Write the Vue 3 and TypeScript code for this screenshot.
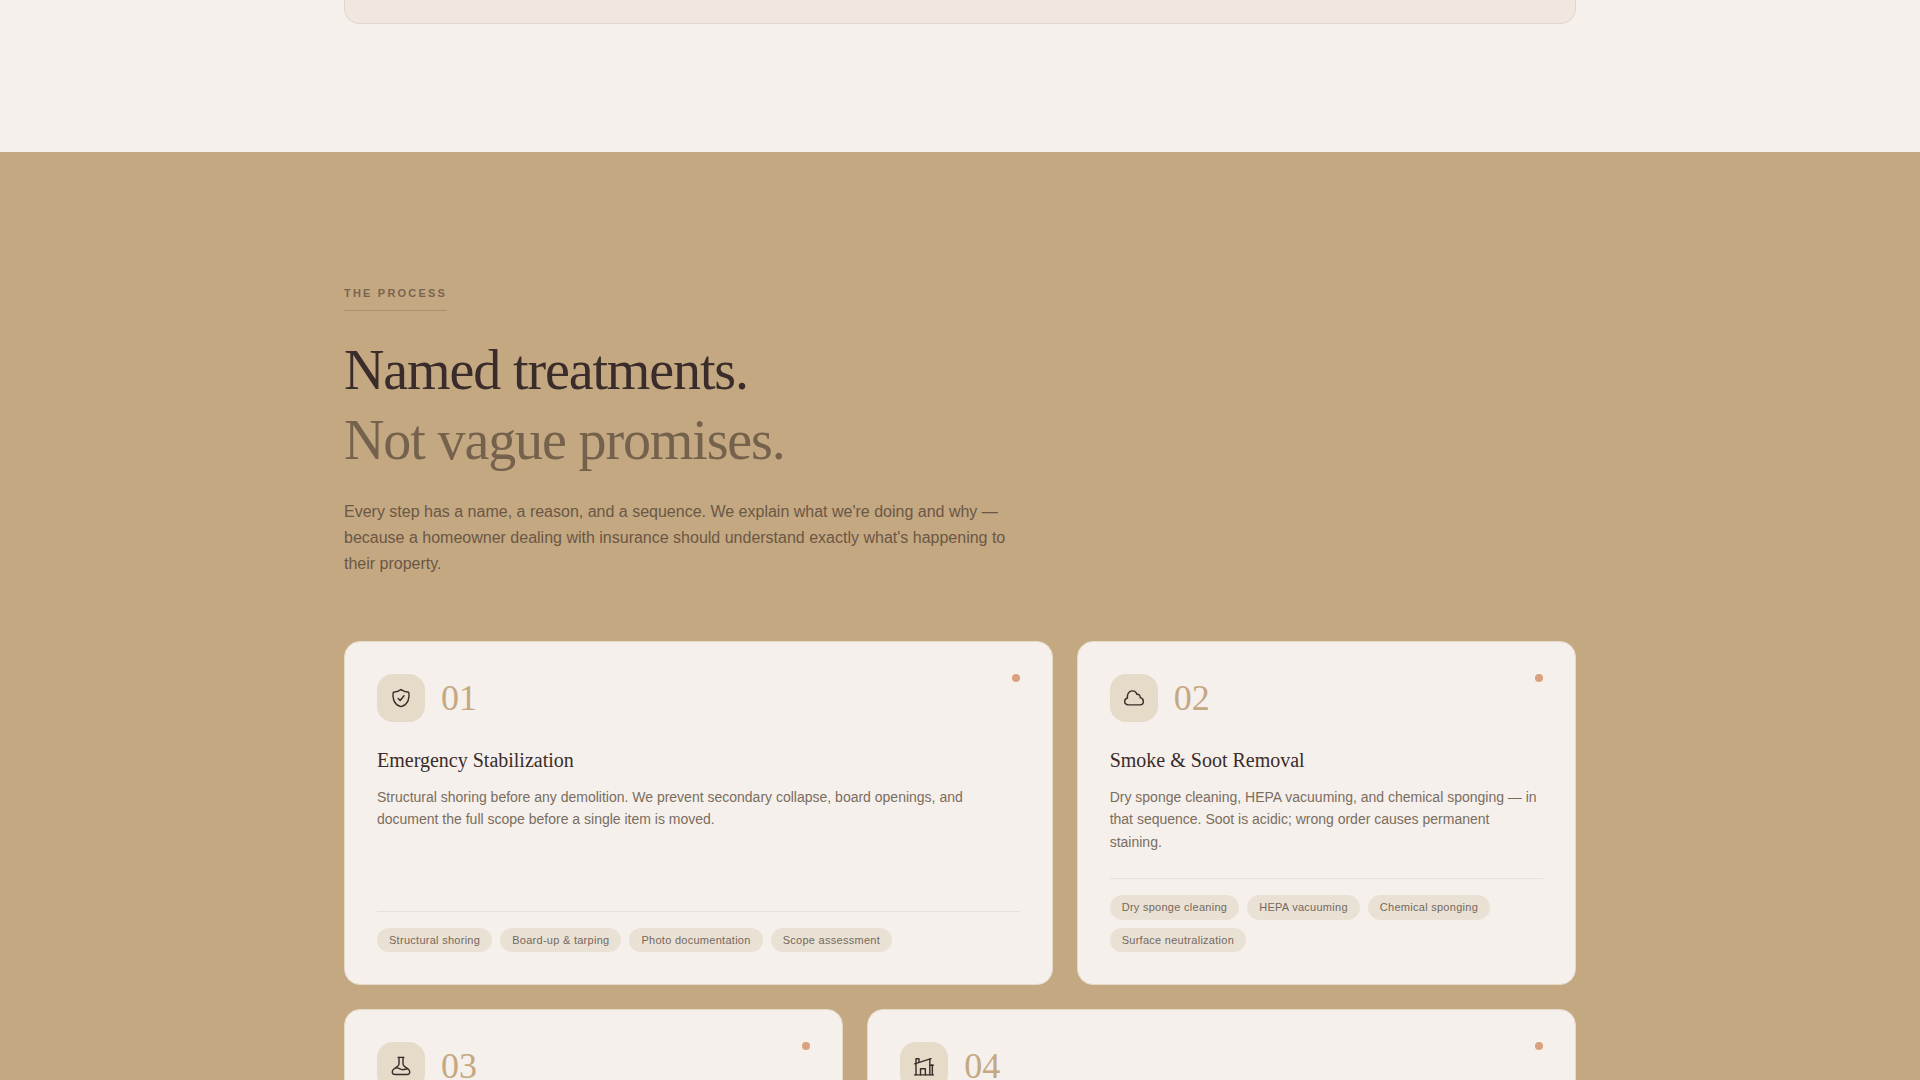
<script setup lang="ts">
type IconName = 'shield' | 'cloud' | 'flask' | 'house'

interface Step {
  number: string
  icon: IconName
  wide: boolean
  title?: string
  text?: string
  tags?: string[]
}

const steps: Step[] = [
  {
    number: '01',
    icon: 'shield',
    wide: true,
    title: 'Emergency Stabilization',
    text: 'Structural shoring before any demolition. We prevent secondary collapse, board openings, and document the full scope before a single item is moved.',
    tags: ['Structural shoring', 'Board-up & tarping', 'Photo documentation', 'Scope assessment'],
  },
  {
    number: '02',
    icon: 'cloud',
    wide: false,
    title: 'Smoke & Soot Removal',
    text: 'Dry sponge cleaning, HEPA vacuuming, and chemical sponging — in that sequence. Soot is acidic; wrong order causes permanent staining.',
    tags: ['Dry sponge cleaning', 'HEPA vacuuming', 'Chemical sponging', 'Surface neutralization'],
  },
  { number: '03', icon: 'flask', wide: false },
  { number: '04', icon: 'house', wide: true },
]

// Stroke paths on a 24-unit grid
const icons: Record<IconName, string[]> = {
  shield: [
    'M12 1.8C9.6 3.9 6.4 5 2.8 5C1 11 3.4 20.2 12 22.4C20.6 20.2 23 11 21.2 5C17.6 5 14.4 3.9 12 1.8Z',
    'M8.6 12.6L11 15L15.6 9.3',
  ],
  cloud: [
    'M5 20.2C2.4 20.2 0.8 18.4 0.8 16.2C0.8 14 2.2 12.4 4.2 12C3.4 6.8 6.4 3.4 9.8 3.4C12.8 3.4 14.8 5 15.4 7.6C17.8 7.2 19.6 9 19.4 11.6C21.8 12 23.2 14 23.2 16.2C23.2 18.6 21.6 20.2 19.2 20.2Z',
  ],
  flask: [
    'M8.4 1.6H15.6',
    'M9.6 1.6V9.2C9.6 11.6 7.2 13.2 4 15.2C0.6 17.4 0.4 22.2 5 22.2H19C23.6 22.2 23.4 17.4 20 15.2C16.8 13.2 14.4 11.6 14.4 9.2V1.6',
    'M5.6 14.4C9 13.2 10.8 16.8 14.2 16.4C16.6 16.2 17.8 15.4 19.8 15.4',
  ],
  house: [
    'M0.8 22.6H23.2',
    'M2.4 22.6V3.2H6V7.2',
    'M0.8 9.4L20.4 3.2',
    'M19 3.8V22.6',
    'M19 11H22V22.6',
    'M20.8 11H23.2',
    'M7.8 22.6V15.2H13.6V22.6',
  ],
}
</script>

<template>
  <main class="page">
    <section class="intro">
      <div class="container">
        <div class="panel"></div>
      </div>
    </section>

    <section class="process">
      <div class="container">
        <header class="heading">
          <span class="eyebrow">The process</span>
          <h2>Named treatments.<br /><span class="muted">Not vague promises.</span></h2>
          <p class="lead">
            Every step has a name, a reason, and a sequence. We explain what we're doing and why —
            because a homeowner dealing with insurance should understand exactly what's happening to
            their property.
          </p>
        </header>

        <div class="grid">
          <article v-for="step in steps" :key="step.number" class="card" :class="{ wide: step.wide }">
            <span class="dot"></span>
            <div class="card-head">
              <span class="icon">
                <svg viewBox="0 0 24 24" aria-hidden="true">
                  <path v-for="d in icons[step.icon]" :key="d" :d="d" />
                </svg>
              </span>
              <span class="number">{{ step.number }}</span>
            </div>
            <h3 v-if="step.title">{{ step.title }}</h3>
            <p v-if="step.text" class="text">{{ step.text }}</p>
            <ul v-if="step.tags" class="tags">
              <li v-for="tag in step.tags" :key="tag">{{ tag }}</li>
            </ul>
          </article>
        </div>
      </div>
    </section>
  </main>
</template>

<style>
body {
  margin: 0;
}
</style>

<style scoped>
.page {
  height: 100vh;
  overflow: hidden;
  background: #f5f0eb;
  color: #3a2c2a;
  font-family: 'Liberation Sans', Arial, sans-serif;
}

.container {
  box-sizing: border-box;
  max-width: 1280px;
  margin: 0 auto;
  padding: 0 24px;
}

.intro {
  padding-bottom: 128px;
}

.panel {
  box-sizing: border-box;
  height: 24px;
  border: 1px solid #e3d6ca;
  border-top: 0;
  border-radius: 0 0 16px 16px;
  background: #f0e7e1;
}

.process {
  padding: 128px 0;
  background: #c4a882;
}

.heading {
  margin-bottom: 64px;
}

.eyebrow {
  display: inline-block;
  margin-bottom: 24px;
  padding: 4px 0 8px;
  border-bottom: 1px solid #a98e6f;
  color: #7a6550;
  font-size: 11px;
  font-weight: 700;
  line-height: 18px;
  letter-spacing: 0.2em;
  text-transform: uppercase;
}

h2 {
  margin: 0 0 24px;
  font-family: 'Liberation Serif', 'Times New Roman', serif;
  font-size: 56px;
  font-weight: 400;
  line-height: 70px;
  letter-spacing: -0.02em;
}

.muted {
  color: #75624d;
}

.lead {
  max-width: 672px;
  margin: 0;
  color: #6b5745;
  font-size: 16px;
  line-height: 26px;
}

.grid {
  display: grid;
  grid-template-columns: repeat(12, 1fr);
  gap: 24px;
}

.card {
  position: relative;
  display: flex;
  flex-direction: column;
  grid-column: span 5;
  box-sizing: border-box;
  min-height: 344px;
  padding: 32px;
  border: 1px solid #e5d9c8;
  border-radius: 16px;
  background: #f5f0eb;
}

.card.wide {
  grid-column: span 7;
}

.dot {
  position: absolute;
  top: 32px;
  right: 32px;
  width: 8px;
  height: 8px;
  border-radius: 50%;
  background: #d8a27e;
}

.card-head {
  display: flex;
  align-items: center;
  gap: 16px;
  margin-bottom: 24px;
}

.icon {
  display: flex;
  align-items: center;
  justify-content: center;
  width: 48px;
  height: 48px;
  border-radius: 16px;
  background: #e6dac9;
}

.icon svg {
  width: 20px;
  height: 20px;
  fill: none;
  stroke: #3a2c2a;
  stroke-width: 1.7;
  stroke-linecap: round;
  stroke-linejoin: round;
}

.number {
  color: #c4a882;
  font-family: 'Liberation Serif', 'Times New Roman', serif;
  font-size: 36px;
  line-height: 36px;
}

h3 {
  margin: 0 0 12px;
  font-family: 'Liberation Serif', 'Times New Roman', serif;
  font-size: 20px;
  font-weight: 400;
  line-height: 28px;
}

.text {
  margin: 0 0 24px;
  color: #7a6d60;
  font-size: 14px;
  line-height: 1.6;
}

.tags {
  display: flex;
  flex-wrap: wrap;
  gap: 8px;
  margin: auto 0 0;
  padding: 16px 0 0;
  border-top: 1px solid #e8dfd6;
  list-style: none;
}

.tags li {
  padding: 4px 12px;
  border-radius: 16px;
  background: #e9e1d4;
  color: #76685d;
  font-size: 11px;
  line-height: 1.5;
  letter-spacing: 0.025em;
}
</style>
